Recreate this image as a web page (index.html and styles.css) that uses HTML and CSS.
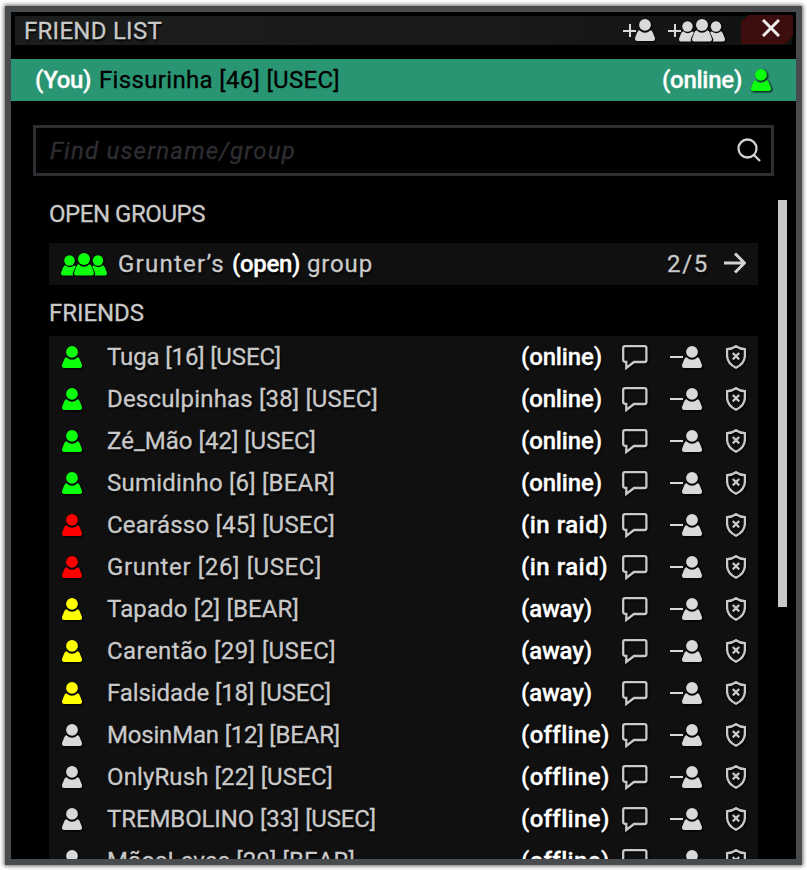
FILE: index.html
```html
<!DOCTYPE html>
<html lang="en">
<head>
<meta charset="utf-8">
<title>Friend list</title>
<link rel="stylesheet" href="styles.css">
</head>
<body>
<svg class="defs" aria-hidden="true">
  <symbol id="user" viewBox="0 0 20 22">
    <circle cx="10" cy="5.9" r="5.9"/>
    <path d="M4.4 11.2Q10 16.4 15.6 11.2Q16.8 11.2 17.7 13.3L19.8 18.4Q20.8 22 17.2 22H2.8Q-.8 22 .2 18.4L2.3 13.3Q3.2 11.2 4.4 11.2Z"/>
  </symbol>
  <symbol id="group" viewBox="0 0 46 23">
    <circle cx="8.5" cy="7.5" r="5.2"/>
    <circle cx="37" cy="7.5" r="5.2"/>
    <circle cx="23" cy="6" r="6"/>
    <path d="M4.3 12.2Q8.5 16 13 12.4Q14.4 12.4 14.8 13.4L12 19.5Q11.3 21.8 12.4 22.5H2Q-.6 22.3 .2 19.3L2.1 14.6Q3 12.4 4.3 12.2Z"/>
    <path d="M41.7 12.2Q37.5 16 33 12.4Q31.6 12.4 31.2 13.4L34 19.5Q34.7 21.8 33.6 22.5H44Q46.6 22.3 45.8 19.3L43.9 14.6Q43 12.4 41.7 12.2Z"/>
    <path d="M17.6 11.3Q23 16.4 28.4 11.3Q29.8 11.5 30.6 13.5L32.8 19.2Q33.5 22.5 30.5 22.5H15.5Q12.5 22.5 13.2 19.2L15.4 13.5Q16.2 11.5 17.6 11.3Z"/>
  </symbol>
  <symbol id="chat" viewBox="0 0 26 25">
    <path d="M3 1.2H22.6Q24.4 1.2 24.4 3V15.3Q24.4 17 22.6 17H12L4.3 23V17Q1.2 17 1.2 15V3Q1.2 1.2 3 1.2Z"/>
  </symbol>
  <symbol id="shield" viewBox="0 0 20 24">
    <path d="M10 1.2Q14 4 18.9 4.2V11Q18.5 18.5 10 22.8Q1.5 18.5 1.1 11V4.2Q6 4 10 1.2ZM6.8 8L13.2 14.4M13.2 8L6.8 14.4"/>
  </symbol>
</svg>
<main class="window">
  <header class="titlebar">
    <h1 class="title"><span data-fit="137">FRIEND LIST</span></h1>
    <div class="tools">
      <i class="plus"></i><svg class="icon user"><use href="#user"/></svg>
      <i class="plus plus-group"></i><svg class="icon group"><use href="#group"/></svg>
    </div>
    <button class="close" aria-label="Close"><svg viewBox="0 0 18 18"><path d="M1 1L17 17M17 1L1 17"/></svg></button>
  </header>
  <section class="self">
    <b class="white" data-fit="55">(You)</b>
    <span class="self-name" data-fit="240">Fissurinha [46] [USEC]</span>
    <b class="white self-status" data-fit="79">(online)</b>
    <svg class="icon user online"><use href="#user"/></svg>
  </section>
  <div class="search">
    <span class="placeholder" data-fit="245">Find username/group</span>
    <svg class="glass" viewBox="0 0 24 24"><circle cx="10.5" cy="10.5" r="9"/><path d="M17 17L23 23"/></svg>
  </div>
  <div class="content">
    <div class="lists">
      <h2 class="heading"><span data-fit="155">OPEN GROUPS</span></h2>
      <div class="group-row">
        <svg class="icon group online"><use href="#group"/></svg>
        <span class="group-name"><span data-fit="106">Grunter’s</span><b class="white" data-fit="67">(open)</b><span data-fit="65">group</span></span>
        <span data-fit="41">2/5</span>
        <svg class="arrow" viewBox="0 0 23 22"><path d="M1 11H21M12 1.5L21.5 11L12 20.5"/></svg>
      </div>
      <h2 class="heading friends-heading"><span data-fit="94">FRIENDS</span></h2>
      <div class="friends" id="friends"></div>
    </div>
    <div class="scroll-thumb"></div>
  </div>
</main>
<script src="app.js"></script>
</body>
</html>
```
FILE: styles.css
```css
* { box-sizing: border-box; }
body {
  margin: 0;
  height: 870px;
  padding: 6px 5px 5px;
  background: #fff;
  overflow: hidden;
  font: 24px/42px Roboto, "Noto Sans", sans-serif;
  color: #c9c9c9;
  -webkit-text-stroke: .3px;
}
.defs { position: absolute; width: 0; height: 0; }
.window {
  width: 797px;
  height: 859px;
  border: 6px solid #484c4e;
  background: #000;
  box-shadow: 0 0 4px 1px #666;
  overflow: hidden;
  white-space: nowrap;
  text-shadow: 1px 2px 2px #000;
}
h1, h2 { margin: 0; font-size: 24px; font-weight: 400; }
.titlebar {
  display: flex;
  height: 29px;
  margin: 4px 4px 14px;
  background: linear-gradient(90deg, #1c1d1d, #181919 65%, #101111);
}
.title { flex: 1; padding-left: 9px; line-height: 31px; }
.tools { display: flex; align-items: flex-start; padding-top: 3px; margin-right: 16px; }
.icon { display: block; flex: none; fill: #d9d9d9; filter: drop-shadow(1px 1px 1px #000); }
.icon.user { width: 20px; height: 22px; }
.icon.group { width: 46px; height: 23px; }
.plus {
  width: 13px;
  height: 13px;
  margin-top: 5px;
  margin-right: -1px;
  background: linear-gradient(#d9d9d9, #d9d9d9) center / 13px 2px no-repeat,
              linear-gradient(#d9d9d9, #d9d9d9) center / 2px 13px no-repeat;
}
.plus-group { margin-left: 13px; margin-right: -2px; }
.close {
  display: flex;
  align-items: flex-start;
  width: 52px;
  height: 29px;
  margin: -1px -1px 0 0;
  padding: 4px 0 0 21px;
  border: 0;
  background: #3e0e0f;
  clip-path: polygon(8px 0, 100% 0, 100% 21px, 44px 100%, 0 100%, 0 7px);
}
.close svg { display: block; width: 18px; height: 18px; fill: none; stroke: #f0eded; stroke-width: 3; }
.white { color: #fff; font-weight: 500; }
.self {
  display: flex;
  align-items: center;
  height: 42px;
  padding: 0 25px 0 24px;
  background: #2a9573;
  text-shadow: none;
}
.self-name { margin-left: 8px; color: #000; }
.self-status { margin-left: auto; margin-right: 9px; }
.online { fill: #0cff0c; }
.raid { fill: #f00; }
.away { fill: #ff0; }
.search {
  display: flex;
  justify-content: space-between;
  align-items: center;
  height: 51px;
  margin: 24px 22px 0;
  padding: 0 10px 0 14px;
  border: 3px solid #2e2d32;
}
.placeholder { color: #2e2d32; font-style: italic; }
.glass, .arrow { fill: none; stroke: #d2d2d2; stroke-width: 2.3; flex: none; }
.glass { width: 24px; height: 24px; margin-top: -2px; }
.content {
  display: flex;
  justify-content: space-between;
  align-items: flex-start;
  height: 683px;
  padding: 24px 9px 0 38px;
}
.lists { width: 709px; }
.heading { height: 43px; line-height: 29px; }
.group-row {
  display: flex;
  align-items: center;
  height: 42px;
  padding: 0 12px;
  background: #101010;
}
.group-name { display: flex; gap: 7px; flex: 1; margin-left: 11px; }
.arrow { width: 23px; height: 22px; margin: -2px 0 0 14px; stroke-width: 3; }
.friends-heading { height: 51px; line-height: 57px; }
.friends { background: #101010; }
.friend {
  display: grid;
  grid-template-columns: 45px 414px 101px 48px 56px 20px;
  align-items: center;
  height: 42px;
  padding: 0 0 2px 13px;
}
.status { font-weight: 500; color: #fff; }
.remove { display: flex; align-items: center; }
.remove::before { content: ""; width: 13px; height: 2px; margin-right: -1px; background: #d9d9d9; }
.chat, .shield {
  fill: none;
  stroke: #c9c9c9;
  stroke-width: 2.3;
  filter: drop-shadow(1px 1px 1px #000);
}
.chat { width: 26px; height: 25px; }
.shield { width: 20px; height: 24px; }
.scroll-thumb { width: 9px; height: 407px; background: #c9c9c9; }
```
FILE: app.js
```javascript
const friends = [
  ["Tuga [16] [USEC]", "online", 173],
  ["Desculpinhas [38] [USEC]", "online", 270],
  ["Zé_Mão [42] [USEC]", "online", 208],
  ["Sumidinho [6] [BEAR]", "online", 227],
  ["Cearásso [45] [USEC]", "raid", 227],
  ["Grunter [26] [USEC]", "raid", 214],
  ["Tapado [2] [BEAR]", "away", 191],
  ["Carentão [29] [USEC]", "away", 228],
  ["Falsidade [18] [USEC]", "away", 223],
  ["MosinMan [12] [BEAR]", "offline", 232],
  ["OnlyRush [22] [USEC]", "offline", 225],
  ["TREMBOLINO [33] [USEC]", "offline", 268],
  ["MãosLeves [20] [BEAR]", "offline", 247]
];
const statuses = {
  online: ["(online)", 80],
  raid: ["(in raid)", 86],
  away: ["(away)", 70],
  offline: ["(offline)", 86]
};

document.getElementById("friends").innerHTML = friends.map(([name, status, width]) => `
  <div class="friend">
    <svg class="icon user ${status}"><use href="#user"/></svg>
    <span><span data-fit="${width}">${name}</span></span>
    <span class="status"><span data-fit="${statuses[status][1]}">${statuses[status][0]}</span></span>
    <svg class="chat"><use href="#chat"/></svg>
    <span class="remove"><svg class="icon user"><use href="#user"/></svg></span>
    <svg class="shield"><use href="#shield"/></svg>
  </div>`).join("");

document.querySelectorAll("[data-fit]").forEach(label => {
  const spare = Number(label.dataset.fit) + 1 - label.getBoundingClientRect().width;
  label.style.letterSpacing = spare / label.textContent.length + "px";
});
```
